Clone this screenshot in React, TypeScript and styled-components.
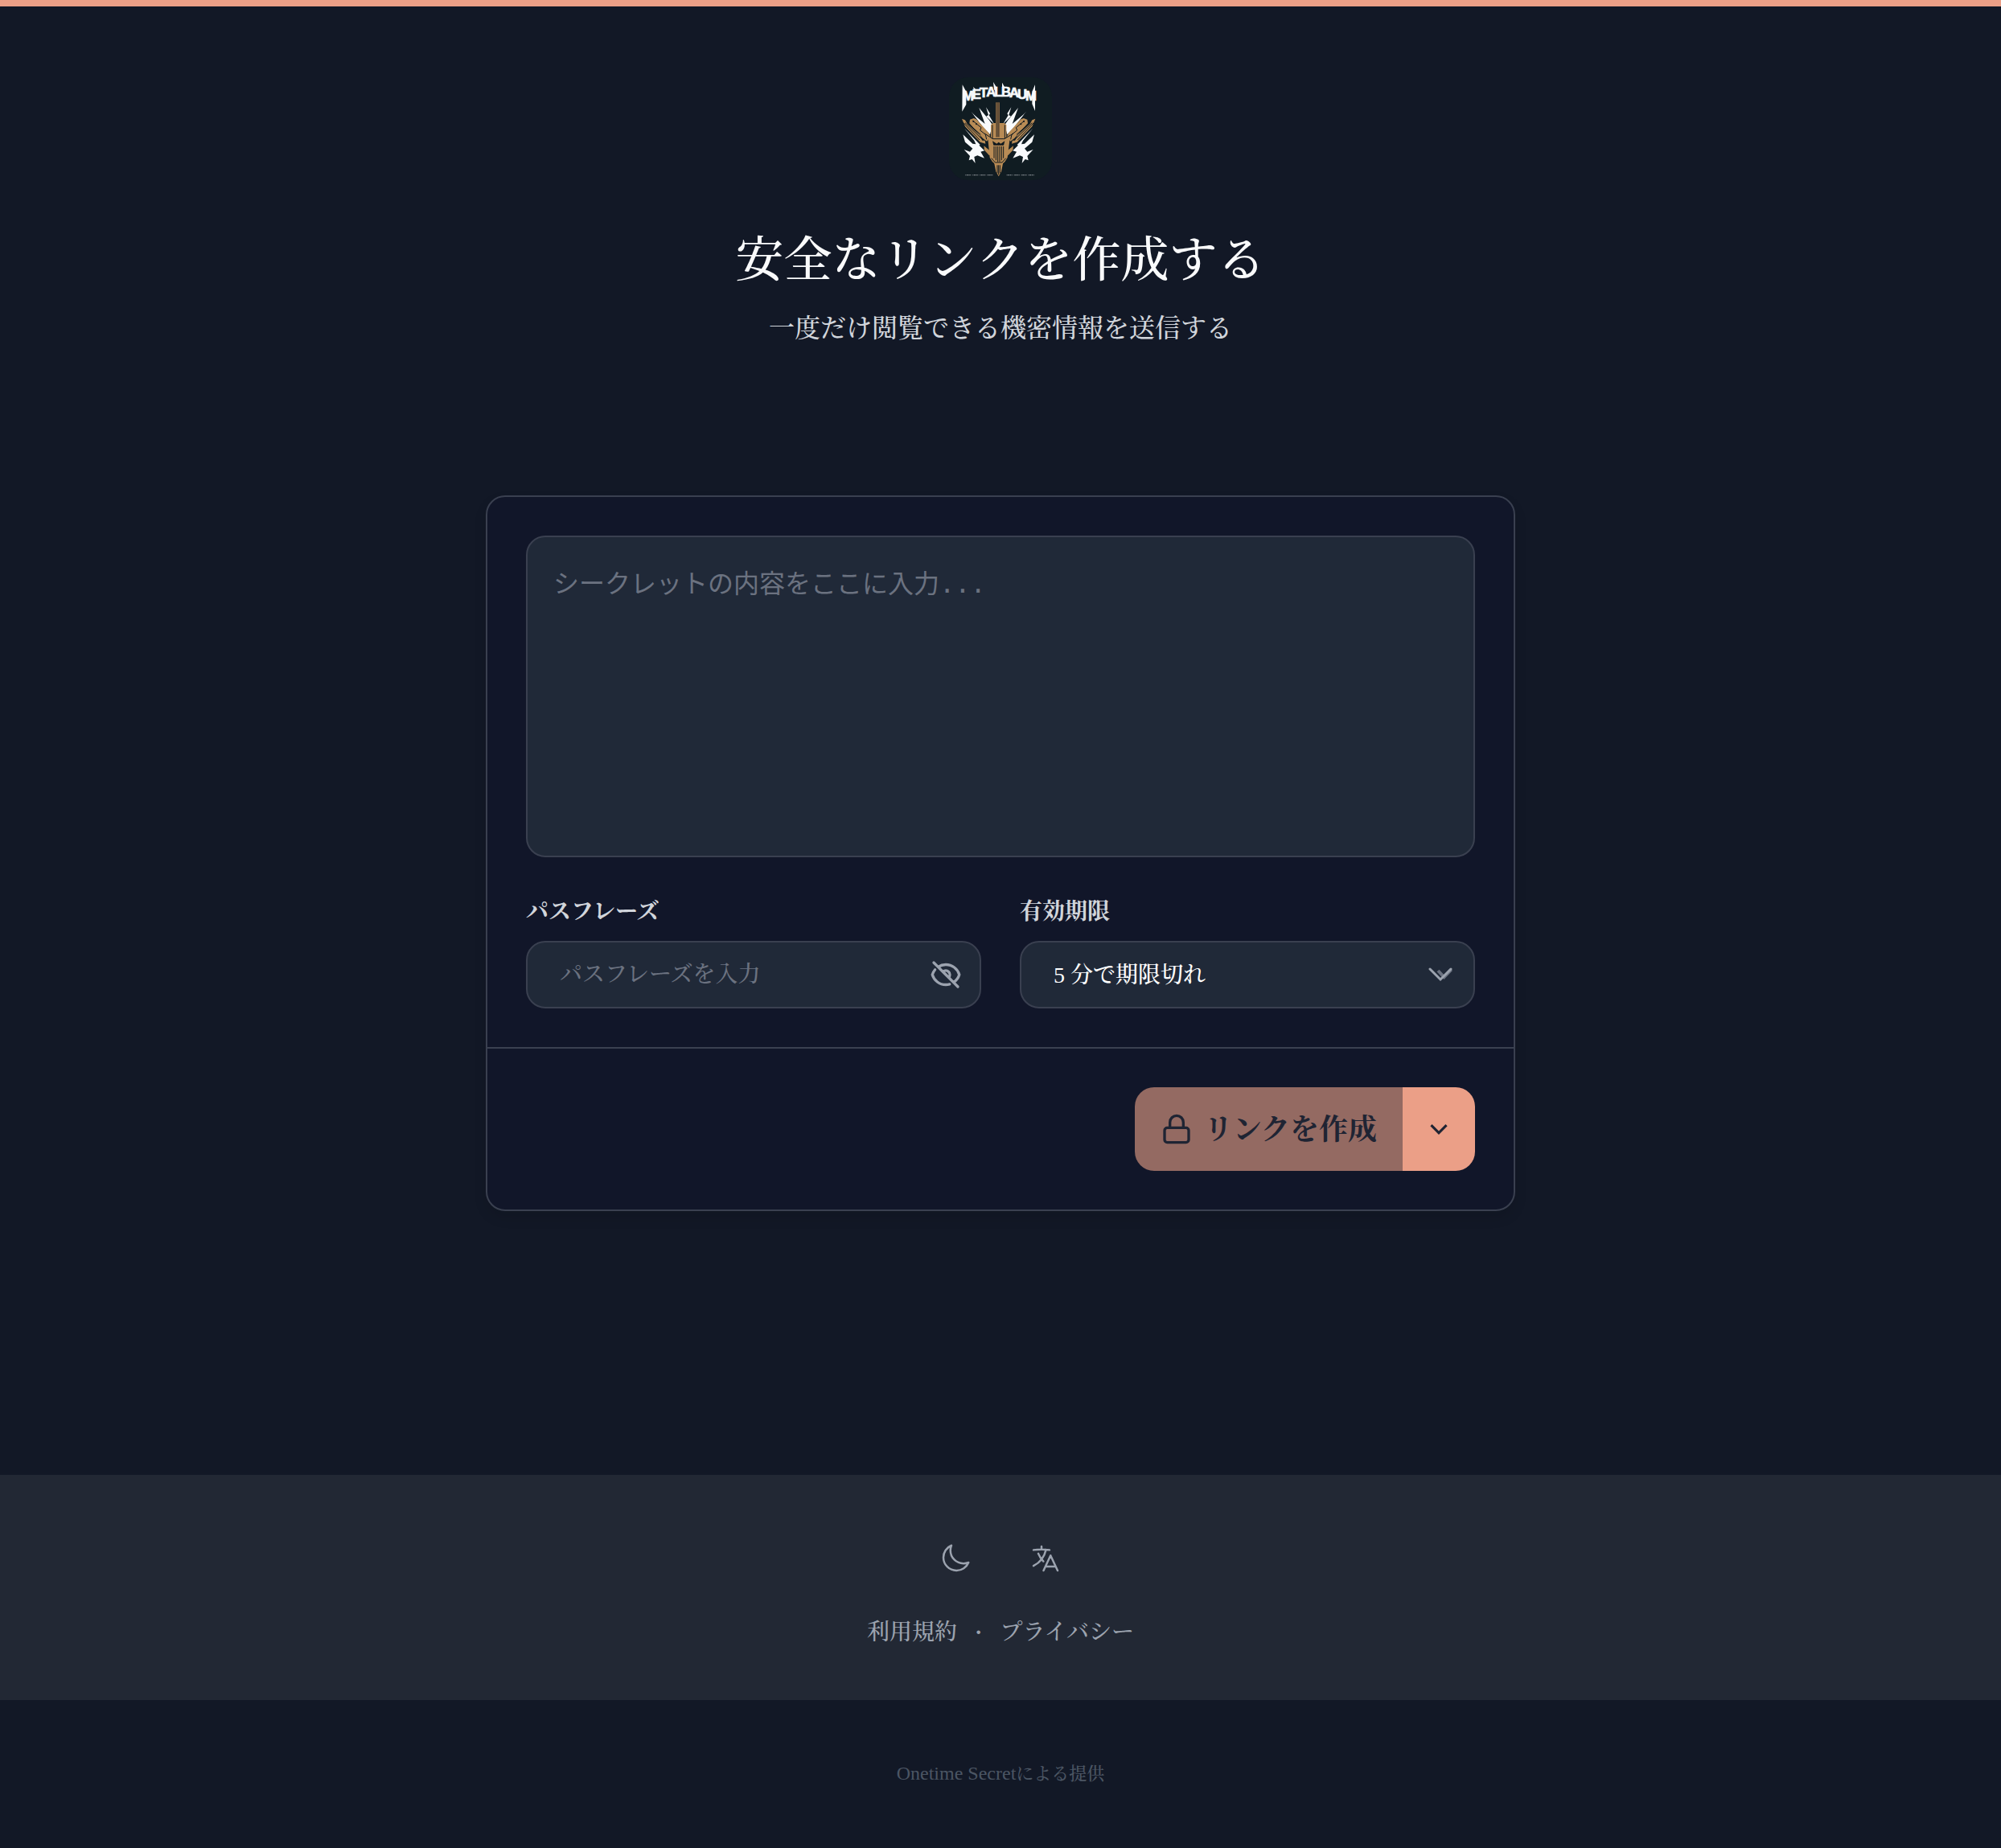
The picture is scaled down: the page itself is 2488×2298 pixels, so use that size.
import React, { useState } from "react";
import styled, { createGlobalStyle } from "styled-components";

const colors = {
  page: "#121826",
  card: "#111629",
  field: "#202938",
  line: "#3a4050",
  footer: "#222834",
  brand: "#eb9f87",
  brandMuted: "#946a62",
  ink: "#1f2433",
  white: "#f9fafb",
  soft: "#d1d5db",
  muted: "#9ca3af",
  faint: "#6b7280",
  dim: "#4b5563",
};

const serif = `"Liberation Serif", "Noto Serif CJK JP", "Noto Sans CJK JP", serif`;
const mono = `"DejaVu Sans Mono", "Noto Sans CJK JP", monospace`;

const GlobalStyle = createGlobalStyle`
  *, *::before, *::after { box-sizing: border-box; }
  body { margin: 0; background: ${colors.page}; font-family: ${serif}; font-weight: 500; }
  button, input, select, textarea { font-family: inherit; font-weight: inherit; margin: 0; }
`;

const Page = styled.div`
  display: flex;
  flex-direction: column;
  min-height: 100vh;
  border-top: 8px solid ${colors.brand};
`;

const Header = styled.header`
  display: flex;
  flex-direction: column;
  align-items: center;
  padding: 88px 32px 0;
  text-align: center;
`;

const LogoLink = styled.a`
  display: block;
  height: 128px;
  margin-bottom: 64px;
`;

const Title = styled.h1`
  margin: 0;
  color: ${colors.white};
  font-size: 60px;
  line-height: 72px;
  font-weight: 500;
`;

const Subtitle = styled.p`
  margin: 24px 0 0;
  color: ${colors.soft};
  font-size: 32px;
  line-height: 48px;
`;

const Main = styled.main`
  flex: 1;
  width: 100%;
  max-width: 1344px;
  margin: 0 auto;
  padding: 184px 32px 96px;
`;

const Card = styled.form`
  border: 2px solid ${colors.line};
  border-radius: 24px;
  background: ${colors.card};
  box-shadow: 0 8px 16px rgba(0, 0, 0, 0.1);
`;

const Fields = styled.div`
  display: grid;
  grid-template-columns: 1fr 1fr;
  gap: 48px;
  padding: 48px;
`;

const SecretInput = styled.textarea`
  grid-column: 1 / -1;
  display: block;
  width: 100%;
  height: 400px;
  padding: 32px;
  border: 2px solid ${colors.line};
  border-radius: 24px;
  background: ${colors.field};
  color: ${colors.white};
  font-family: ${mono};
  font-size: 32px;
  font-weight: 400;
  line-height: 52px;
  resize: none;
  &::placeholder { color: ${colors.faint}; opacity: 1; }
`;

const Field = styled.div`
  display: flex;
  flex-direction: column;
  gap: 16px;
`;

const Label = styled.label`
  color: ${colors.soft};
  font-size: 28px;
  line-height: 40px;
  font-weight: 700;
`;

const Control = styled.div`
  position: relative;
  height: 84px;
`;

const PassphraseInput = styled.input`
  width: 100%;
  height: 100%;
  padding: 0 88px 0 40px;
  border: 2px solid ${colors.line};
  border-radius: 24px;
  background: ${colors.field};
  color: ${colors.white};
  font-size: 28px;
  &::placeholder { color: ${colors.faint}; opacity: 1; }
`;

const ExpirySelect = styled.select`
  width: 100%;
  height: 100%;
  padding: 0 88px 0 40px;
  border: 2px solid ${colors.line};
  border-radius: 24px;
  background: ${colors.field};
  color: #ffffff;
  font-size: 28px;
  appearance: none;
`;

const RevealButton = styled.button`
  position: absolute;
  inset: 0 0 0 auto;
  display: flex;
  align-items: center;
  padding: 0 24px;
  border: 0;
  background: none;
  color: ${colors.muted};
  cursor: pointer;
`;

const SelectArrow = styled.span`
  position: absolute;
  inset: 0 24px 0 auto;
  display: flex;
  align-items: center;
  color: ${colors.muted};
  pointer-events: none;
`;

const Actions = styled.div`
  display: flex;
  justify-content: flex-end;
  padding: 48px;
  border-top: 2px solid ${colors.line};
`;

const SubmitButton = styled.button`
  display: flex;
  align-items: center;
  gap: 14px;
  height: 104px;
  padding: 0 32px;
  border: 0;
  border-radius: 24px 0 0 24px;
  background: ${colors.brandMuted};
  color: ${colors.ink};
  font-size: 36px;
  font-weight: 700;
`;

const SubmitText = styled.span`
  padding-bottom: 6px;
`;

const MenuButton = styled.button`
  display: flex;
  align-items: center;
  justify-content: center;
  width: 90px;
  height: 104px;
  padding: 0;
  border: 0;
  border-radius: 0 24px 24px 0;
  background: ${colors.brand};
  color: ${colors.ink};
  cursor: pointer;
`;

const Footer = styled.footer`
  display: flex;
  flex-direction: column;
  align-items: center;
  gap: 32px;
  padding: 64px 32px;
  background: ${colors.footer};
  color: ${colors.muted};
`;

const ToggleRow = styled.div`
  display: flex;
  gap: 32px;
`;

const IconButton = styled.button`
  display: flex;
  align-items: center;
  justify-content: center;
  width: 80px;
  height: 80px;
  padding: 0;
  border: 0;
  background: none;
  color: inherit;
  cursor: pointer;
`;

const LinkRow = styled.nav`
  display: flex;
  gap: 22px;
  font-size: 28px;
  line-height: 40px;
`;

const FooterLink = styled.a`
  color: inherit;
  text-decoration: none;
`;

const Dot = styled.span`
  font-weight: 700;
`;

const Credit = styled.div`
  padding: 72px 32px;
  color: ${colors.dim};
  font-size: 22px;
  line-height: 40px;
  text-align: center;
`;

const CreditLink = styled.a`
  color: inherit;
  text-decoration: none;
`;

const Latin = styled.span`
  font-size: 24px;
  line-height: 1;
`;

type IconProps = { d: string; strokeWidth?: number };

const StrokeIcon = ({ d, strokeWidth = 1.5 }: IconProps) => (
  <svg width="40" height="40" viewBox="0 0 24 24" fill="none" stroke="currentColor"
    strokeWidth={strokeWidth} strokeLinecap="round" strokeLinejoin="round" aria-hidden="true">
    <path d={d} />
  </svg>
);

const paths = {
  eyeSlash:
    "M3.98 8.223A10.477 10.477 0 0 0 1.934 12C3.226 16.338 7.244 19.5 12 19.5c.993 0 1.953-.138 2.863-.395M6.228 6.228A10.451 10.451 0 0 1 12 4.5c4.756 0 8.773 3.162 10.065 7.498a10.522 10.522 0 0 1-4.293 5.774M6.228 6.228 3 3m3.228 3.228 3.65 3.65m7.894 7.894L21 21m-3.228-3.228-3.65-3.65m0 0a3 3 0 1 0-4.243-4.243m4.242 4.242L9.88 9.88",
  lock: "M5 11h14a2 2 0 0 1 2 2v7a2 2 0 0 1-2 2H5a2 2 0 0 1-2-2v-7a2 2 0 0 1 2-2zM7 11V7a5 5 0 0 1 10 0v4",
  moon: "M21.752 15.002A9.72 9.72 0 0 1 18 15.75c-5.385 0-9.75-4.365-9.75-9.75 0-1.33.266-2.597.748-3.752A9.753 9.753 0 0 0 3 11.25C3 16.635 7.365 21 12.75 21a9.753 9.753 0 0 0 9.002-5.998Z",
  language:
    "m10.5 21 5.25-11.25L21 21m-9-3h7.5M3 5.621a48.474 48.474 0 0 1 6-.371m0 0c1.12 0 2.233.038 3.334.114M9 5.25V3m3.334 2.364C11.176 10.658 7.69 15.08 3 17.502m9.334-12.138c.896.061 1.785.147 2.666.257m-4.589 8.495a18.023 18.023 0 0 1-3.827-5.802",
};

const ChevronIcon = () => (
  <svg width="44" height="44" viewBox="0 0 24 24" fill="currentColor" aria-hidden="true">
    <path d="M7.41 8.78 12 13.37l4.59-4.59L17.800 10l-5.800 5.800-5.800-5.800z" />
  </svg>
);

const DoubleChevronIcon = () => (
  <svg width="40" height="40" viewBox="0 0 40 40" fill="none" aria-hidden="true">
    <path d="m18 15 7.500 8 9-9.500" stroke={colors.faint} strokeWidth="4" />
    <path d="m8 13 13 13 13-13" stroke="currentColor" strokeWidth="3" strokeLinecap="round" />
  </svg>
);

/* Letter, left edge and baseline: the name is set on a shallow arch. */
const wordmark: Array<[string, number, number]> = [
  ["M", 141, 134],
  ["E", 176, 128],
  ["T", 204, 124],
  ["A", 229, 121],
  ["L", 259, 119],
  ["B", 285, 119],
  ["A", 315, 123],
  ["U", 345, 128],
  ["M", 375, 134],
];

/* One wing of the emblem; the other is its mirror image. */
const Wing = () => (
  <g>
    <g fill="#f8fafc">
      <path d="M202 162 239 207 252 226 243 262 218 236 180 186 224 222z" />
      <path d="M228 160 243 184 239 190 258 222 229 194 237 189z" />
      <path d="M172 176 220 226 216 230z" />
      <path d="M142 262 178 296 190 298 184 284 222 322 208 326 222 350 196 340 184 345 188 369 176 354 164 358 168 342 146 318 168 326 178 314 150 290z" />
      <path d="M148 240 206 300 200 304z" />
    </g>
    <g fill="#b88b55">
      <path d="M138 203 150 208 158 222 204 264 214 284 224 284 226 296 206 290 150 232z" />
      <path d="M168 206 182 201 192 205 238 256 244 270 231 287 216 276 166 220z" />
      <path d="M220 304 242 322 246 336 240 340 222 320z" />
    </g>
    <path d="M150 218 214 280M158 218 208 262M178 210 210 236 206 246 226 262 230 280M144 218 204 282"
      fill="none" stroke="#10191f" strokeWidth="3" />
    <circle cx="181" cy="213" r="3" fill="#10191f" />
    <circle cx="192" cy="223" r="3" fill="#10191f" />
  </g>
);

const Logo = () => (
  <svg width="128" height="128" viewBox="90 48 384 384" role="img" aria-label="Metalbaum">
    <rect x="90" y="48" width="384" height="384" rx="72" fill="#101c22" />
    <g fill="#f8fafc" stroke="#f8fafc" strokeWidth="2" fontSize="50" fontWeight="700"
      fontFamily='"Liberation Sans Narrow", "Liberation Sans", sans-serif'>
      {wordmark.map(([letter, x, y]) => (
        <text key={x} x={x} y={y}>{letter}</text>
      ))}
    </g>
    <path fill="#f8fafc"
      d="M140 76 154 102 154 150 139 176zM411 76 400 102 400 148 411 174zM255 66 266 84 264 100 258 94zM288 68 298 86 288 88zM180 84 190 94 184 100z" />
    <Wing />
    <g transform="translate(550 0) scale(-1 1)"><Wing /></g>
    <g fill="#b88b55">
      <path d="M258 366 292 366 285 400 275 418 265 400z" />
      <path d="M246 226 254 219 296 219 304 226 304 282 246 282z" />
      <path d="M234 268 260 280 290 280 318 268 308 348 298 364 288 372 262 372 252 364 242 348z" />
    </g>
    <path d="M264 142h15v130h-15z" fill="#7d6040" />
    <path d="M269 142v128M274 142v128" stroke="#443a2c" strokeWidth="2" />
    <path d="M222 258 254 278 296 278 330 258M252 226v52M298 226v52M265 306v52M272 306v58M279 306v58M286 306v52M258 306v44M293 306v44M248 350 262 366 288 366 302 350M270 376v30M275 376v36M280 376v30"
      fill="none" stroke="#10191f" strokeWidth="3" />
    <path d="M252 286 268 296 275 290 283 296 298 286 294 302 256 302z" fill="#10191f" />
    <path d="M151 413h104M305 413h104" stroke="#858b90" strokeWidth="4" strokeDasharray="3 2 5 2 4 2 3 6" />
  </svg>
);

export default function App() {
  const [revealed, setRevealed] = useState(false);

  return (
    <>
      <GlobalStyle />
      <Page lang="ja">
        <Header>
          <LogoLink href="#" aria-label="ホーム"><Logo /></LogoLink>
          <Title>安全なリンクを作成する</Title>
          <Subtitle>一度だけ閲覧できる機密情報を送信する</Subtitle>
        </Header>

        <Main>
          <Card onSubmit={(event) => event.preventDefault()}>
            <Fields>
              <SecretInput aria-label="シークレットの内容" placeholder="シークレットの内容をここに入力..." />
              <Field>
                <Label htmlFor="passphrase">パスフレーズ</Label>
                <Control>
                  <PassphraseInput id="passphrase" type={revealed ? "text" : "password"}
                    autoComplete="off" placeholder="パスフレーズを入力" />
                  <RevealButton type="button" aria-label="パスフレーズの表示を切り替える"
                    onClick={() => setRevealed(!revealed)}>
                    <StrokeIcon d={paths.eyeSlash} strokeWidth={2} />
                  </RevealButton>
                </Control>
              </Field>
              <Field>
                <Label htmlFor="expiry">有効期限</Label>
                <Control>
                  <ExpirySelect id="expiry" defaultValue="300">
                    <option value="300">5 分で期限切れ</option>
                  </ExpirySelect>
                  <SelectArrow><DoubleChevronIcon /></SelectArrow>
                </Control>
              </Field>
            </Fields>
            <Actions>
              <SubmitButton type="submit" disabled>
                <StrokeIcon d={paths.lock} strokeWidth={2} />
                <SubmitText>リンクを作成</SubmitText>
              </SubmitButton>
              <MenuButton type="button" aria-label="その他の操作"><ChevronIcon /></MenuButton>
            </Actions>
          </Card>
        </Main>

        <Footer>
          <ToggleRow>
            <IconButton type="button" aria-label="テーマを切り替える"><StrokeIcon d={paths.moon} /></IconButton>
            <IconButton type="button" aria-label="言語を選択"><StrokeIcon d={paths.language} /></IconButton>
          </ToggleRow>
          <LinkRow>
            <FooterLink href="#terms">利用規約</FooterLink>
            <Dot>·</Dot>
            <FooterLink href="#privacy">プライバシー</FooterLink>
          </LinkRow>
        </Footer>
        <Credit>
          <CreditLink href="#about"><Latin>Onetime Secret</Latin>による提供</CreditLink>
        </Credit>
      </Page>
    </>
  );
}
